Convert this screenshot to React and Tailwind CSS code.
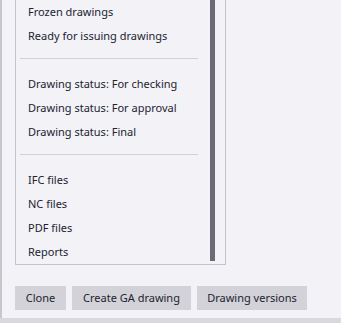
const groups = [
  ["Frozen drawings", "Ready for issuing drawings"],
  ["Drawing status: For checking", "Drawing status: For approval", "Drawing status: Final"],
  ["IFC files", "NC files", "PDF files", "Reports"],
];

const actions = [
  { label: "Clone", width: "w-[51px]" },
  { label: "Create GA drawing", width: "w-[119px]" },
  { label: "Drawing versions", width: "w-[110px]" },
];

export default function App() {
  return (
    <div
      className="w-[341px] h-[323px] bg-[#f2f2f7] flex flex-col text-[11px] text-[#23232f]"
      style={{ fontFamily: '"Segoe UI", "Noto Sans", sans-serif' }}
    >
      <div className="flex-1 border-l-2 border-[#c6c6cc] pl-[13px] flex flex-col">
        <div className="w-[211px] h-[265px] border-x border-b border-[#c3c3c9] flex">
          <div className="flex-1 pl-[12px] pr-[4px]">
            {groups.map((items, gi) => (
              <div key={gi}>
                {gi > 0 && (
                  <div className="h-[24px] pt-[10px] -ml-[8px] w-[178px]">
                    <div className="h-px bg-[#d0d0d6]" />
                  </div>
                )}
                {items.map((item) => (
                  <div key={item} className="h-[24px] pt-px flex items-center">
                    {item}
                  </div>
                ))}
              </div>
            ))}
          </div>
          <div className="w-[5px] h-[261px] bg-[#6b6a76] mr-[10px]" />
        </div>
        <div className="mt-[21px] flex gap-[6px]">
          {actions.map((a) => (
            <button
              key={a.label}
              type="button"
              className={`${a.width} h-[24px] pt-px bg-[#d2d2d8] flex items-center justify-center`}
            >
              {a.label}
            </button>
          ))}
        </div>
      </div>
      <div className="h-[5px] bg-[#d8d8de]" />
    </div>
  );
}
